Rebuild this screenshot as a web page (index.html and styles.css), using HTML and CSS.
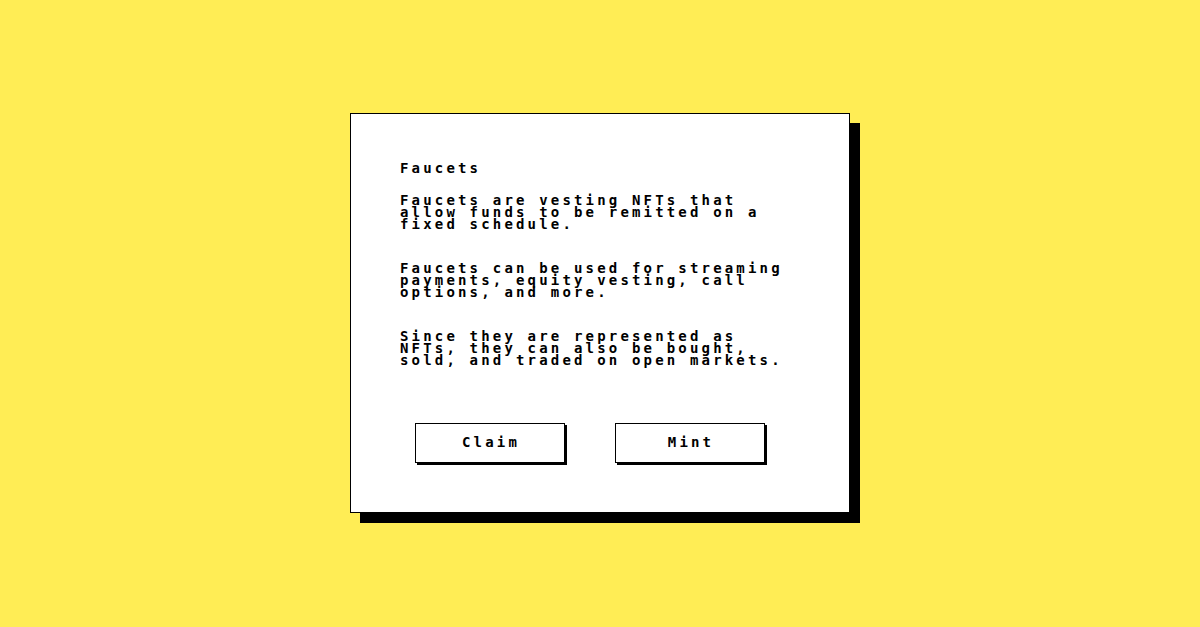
FILE: index.html
```html
<!DOCTYPE html>
<html lang="en">
<head>
<meta charset="utf-8">
<title>Faucets</title>
<link rel="stylesheet" href="styles.css">
</head>
<body>
  <main class="card">
    <h1 class="title">Faucets</h1>
    <p class="para">Faucets are vesting NFTs that allow funds to be remitted on a fixed schedule.</p>
    <p class="para">Faucets can be used for streaming payments, equity vesting, call options, and more.</p>
    <p class="para">Since they are represented as NFTs, they can also be bought, sold, and traded on open markets.</p>
    <div class="actions">
      <button class="btn" type="button">Claim</button>
      <button class="btn" type="button">Mint</button>
    </div>
  </main>
</body>
</html>
```
FILE: styles.css
```css
html, body {
  margin: 0;
  padding: 0;
}

body {
  background: #ffed55;
  height: 100vh;
  display: flex;
  align-items: center;
  justify-content: center;
  font-family: "DejaVu Sans Mono", "Liberation Mono", monospace;
  font-weight: bold;
  font-size: 14px;
  letter-spacing: 3.17px;
  color: #000;
}

.card {
  box-sizing: border-box;
  width: 500px;
  height: 400px;
  background: #fff;
  border: 1px solid #000;
  box-shadow: 10px 10px 0 #000;
  padding: 48px 48px 48px 49px;
  margin-top: -1px;
}

.title {
  margin: 0 0 20px;
  font-size: 14px;
  font-weight: bold;
  line-height: 12px;
}

.para {
  margin: 0 0 32px;
  width: 395px;
  line-height: 12px;
}

.para:last-of-type {
  margin-bottom: 57px;
}

.actions {
  display: flex;
  gap: 50px;
  padding-left: 15px;
}

.btn {
  box-sizing: border-box;
  width: 150px;
  height: 40px;
  background: #fff;
  border: 1px solid #000;
  box-shadow: 2px 2px 0 #000;
  font: inherit;
  letter-spacing: inherit;
  color: #000;
  padding: 0 0 2px 2px;
  display: flex;
  align-items: center;
  justify-content: center;
}
```
